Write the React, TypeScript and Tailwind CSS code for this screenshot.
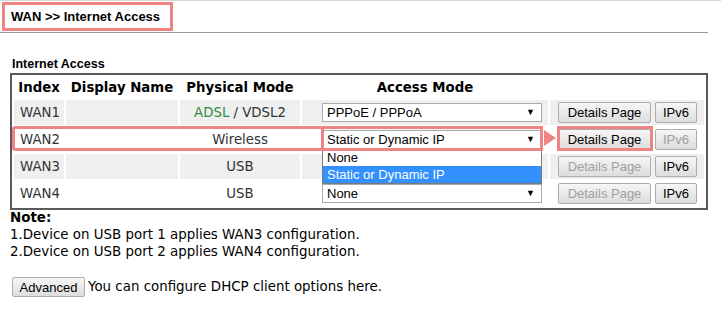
import React from "react";

const rows = [
  { id: "WAN1", mode: "adsl", access: "PPPoE / PPPoA", shaded: true, detailsOn: true, ipv6On: true },
  { id: "WAN2", mode: "Wireless", access: "Static or Dynamic IP", shaded: false, detailsOn: true, ipv6On: false },
  { id: "WAN3", mode: "USB", access: "", shaded: true, detailsOn: false, ipv6On: true },
  { id: "WAN4", mode: "USB", access: "None", shaded: false, detailsOn: false, ipv6On: true },
];

const Btn = ({ label, on, w }: { label: string; on: boolean; w: string }) => (
  <button
    className={`h-[21px] ${w} rounded-[2px] border border-[#adadad] bg-gradient-to-b from-[#f6f6f6] to-[#dddddd] font-['Liberation_Sans',Arial,sans-serif] text-[13px] leading-none ${
      on ? "text-black" : "text-[#a0a0a0]"
    }`}
  >
    {label}
  </button>
);

const Select = ({ value }: { value: string }) => (
  <div className="flex h-[19px] w-[220px] items-center justify-between border border-[#a9a9a9] bg-white pl-[4px] pr-[6px] font-['Liberation_Sans',Arial,sans-serif] text-[13px] text-black">
    <span>{value}</span>
    <span className="text-[9px]">▼</span>
  </div>
);

export default function App() {
  return (
    <div className="relative h-[319px] w-[721px] overflow-hidden bg-white font-['DejaVu_Sans',Verdana,sans-serif] text-[#222]">
      {/* header strip */}
      <div className="h-[1px] w-full bg-[#d8d8d8]" />
      <div className="flex h-[32px] w-[708px] items-start border-b border-[#9a9a9a]">
        <div className="ml-[2px] mt-[1px] flex h-[29px] w-[171px] items-center border-[3px] border-[#f08383] pl-[6px] font-['Liberation_Sans',Arial,sans-serif] text-[13px] font-bold text-black">
          WAN &gt;&gt; Internet Access
        </div>
      </div>

      <div className="ml-[12px] mt-[23px] font-['Liberation_Sans',Arial,sans-serif] text-[12.5px] font-bold leading-[17px] text-black">
        Internet Access
      </div>

      {/* table box */}
      <div className="relative ml-[10px] w-[698px] border-2 border-[#5a5a5a]">
        <table className="w-full table-fixed border-separate border-spacing-[2px] text-[13.3px]">
          <colgroup>
            <col className="w-[50px]" />
            <col className="w-[112px]" />
            <col className="w-[120px]" />
            <col className="w-[246px]" />
            <col className="w-[154px]" />
          </colgroup>
          <thead>
            <tr className="h-[21px] text-black">
              <th className="p-0 text-center font-bold">Index</th>
              <th className="p-0 text-center font-bold">Display Name</th>
              <th className="p-0 text-center font-bold">Physical Mode</th>
              <th className="p-0 text-center font-bold">Access Mode</th>
              <th className="p-0"></th>
            </tr>
          </thead>
          <tbody>
            {rows.map((r) => {
              const bg = r.shaded ? "bg-[#efefef]" : "bg-white";
              return (
                <tr key={r.id} className="h-[25px]">
                  <td className={`${bg} p-0 pl-[6px] text-[#333]`}>{r.id}</td>
                  <td className={`${bg} p-0`}></td>
                  <td className={`${bg} p-0 text-center text-[#333]`}>
                    {r.mode === "adsl" ? (
                      <>
                        <span className="text-[#2e8b3e]">ADSL</span> / VDSL2
                      </>
                    ) : (
                      r.mode
                    )}
                  </td>
                  <td className={`${bg} p-0 pl-[20px]`}>
                    {r.access ? <Select value={r.access} /> : null}
                  </td>
                  <td className={`${bg} p-0`}>
                    <div className="flex items-center gap-[4px] pl-[8px]">
                      <Btn label="Details Page" on={r.detailsOn} w="w-[93px]" />
                      <Btn label="IPv6" on={r.ipv6On} w="w-[42px]" />
                    </div>
                  </td>
                </tr>
              );
            })}
          </tbody>
        </table>

        {/* open dropdown list of WAN2 */}
        <div className="absolute left-[310px] top-[74px] w-[220px] border border-t-0 border-[#7a7a7a] bg-white font-['Liberation_Sans',Arial,sans-serif] text-[13px] leading-[17px] text-black">
          <div className="pl-[4px]">None</div>
          <div className="bg-[#3390ff] pl-[4px] text-white">Static or Dynamic IP</div>
        </div>

        {/* annotations */}
        <div className="absolute left-0 top-[51px] h-[25px] w-[312px] rounded-[3px] border-[3px] border-[#f08383]" />
        <div className="absolute left-[310px] top-[51px] h-[25px] w-[221px] border-[3px] border-l-0 border-[#f08383]" />
        <div className="absolute left-[532px] top-[55px] h-0 w-0 border-y-[8px] border-l-[12px] border-y-transparent border-l-[#f08383]" />
        <div className="absolute left-[545px] top-[51px] h-[25px] w-[96px] border-[3px] border-[#f08383]" />
      </div>

      <div className="ml-[10px] mt-[-1px] text-[13.4px] leading-[17px] text-black">
        <div className="font-bold">Note:</div>
        <div>1.Device on USB port 1 applies WAN3 configuration.</div>
        <div>2.Device on USB port 2 applies WAN4 configuration.</div>
      </div>

      <div className="ml-[12px] mt-[17px] flex items-center gap-[3px] text-[13.4px] text-black">
        <button className="h-[20px] w-[73px] rounded-[2px] border border-[#adadad] bg-gradient-to-b from-[#f6f6f6] to-[#dddddd] font-['Liberation_Sans',Arial,sans-serif] text-[13px]">
          Advanced
        </button>
        <span>You can configure DHCP client options here.</span>
      </div>
    </div>
  );
}
